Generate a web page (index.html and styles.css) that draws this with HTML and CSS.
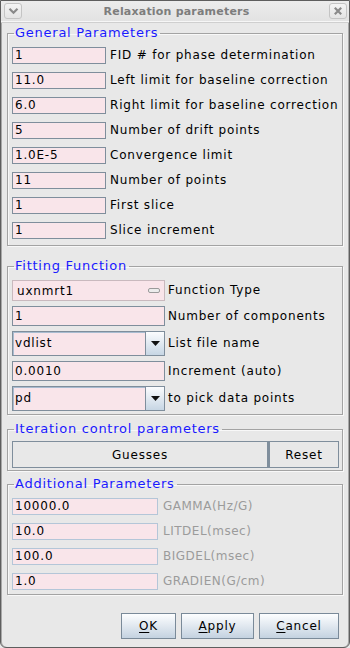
FILE: index.html
```html
<!DOCTYPE html>
<html>
<head>
<meta charset="utf-8">
<title>Relaxation parameters</title>
<link rel="stylesheet" href="styles.css">
</head>
<body>
<div class="window">
  <div class="titlebar">
    <span class="tbtn"><svg width="11" height="8" viewBox="0 0 11 8"><path d="M1.5 1.8 L5.5 5.8 L9.5 1.8" fill="none" stroke="#8a8a8a" stroke-width="2.2"/></svg></span>
    <span class="title">Relaxation parameters</span>
    <span class="tbtn"><svg width="10" height="10" viewBox="0 0 10 10"><path d="M1.8 1.8 L8.2 8.2 M8.2 1.8 L1.8 8.2" fill="none" stroke="#8a8a8a" stroke-width="2.2"/></svg></span>
  </div>
  <div class="content">
    <fieldset class="group g1">
      <legend>General Parameters</legend>
      <div class="grid grid1">
        <span class="field">1</span><span class="label">FID # for phase determination</span>
        <span class="field">11.0</span><span class="label">Left limit for baseline correction</span>
        <span class="field">6.0</span><span class="label">Right limit for baseline correction</span>
        <span class="field">5</span><span class="label">Number of drift points</span>
        <span class="field">1.0E-5</span><span class="label">Convergence limit</span>
        <span class="field">11</span><span class="label">Number of points</span>
        <span class="field">1</span><span class="label">First slice</span>
        <span class="field">1</span><span class="label">Slice increment</span>
      </div>
    </fieldset>

    <fieldset class="group g2">
      <legend>Fitting Function</legend>
      <div class="grid grid2">
        <span class="combo-flat">uxnmrt1<span class="mini"></span></span><span class="label">Function Type</span>
        <span class="field tall20">1</span><span class="label">Number of components</span>
        <span class="combo"><span class="combo-text">vdlist</span><span class="arrow"><svg width="9" height="5" viewBox="0 0 9 5"><path d="M0 0 H9 L4.5 5 Z" fill="#111"/></svg></span></span><span class="label">List file name</span>
        <span class="field tall20">0.0010</span><span class="label">Increment (auto)</span>
        <span class="combo"><span class="combo-text">pd</span><span class="arrow"><svg width="9" height="5" viewBox="0 0 9 5"><path d="M0 0 H9 L4.5 5 Z" fill="#111"/></svg></span></span><span class="label">to pick data points</span>
      </div>
    </fieldset>

    <fieldset class="group g3">
      <legend>Iteration control parameters</legend>
      <div class="btnrow">
        <span class="flatbtn grow">Guesses</span><span class="flatbtn reset">Reset</span>
      </div>
    </fieldset>

    <fieldset class="group g4">
      <legend>Additional Parameters</legend>
      <div class="grid grid4">
        <span class="field dis">10000.0</span><span class="label gray">GAMMA(Hz/G)</span>
        <span class="field dis">10.0</span><span class="label gray">LITDEL(msec)</span>
        <span class="field dis">100.0</span><span class="label gray">BIGDEL(msec)</span>
        <span class="field dis">1.0</span><span class="label gray">GRADIEN(G/cm)</span>
      </div>
    </fieldset>

    <div class="actions">
      <span class="btn ok"><u>O</u>K</span>
      <span class="btn apply"><u>A</u>pply</span>
      <span class="btn cancel"><u>C</u>ancel</span>
    </div>
  </div>
</div>
</body>
</html>
```

FILE: styles.css
```css
* { box-sizing: border-box; }
html, body { margin: 0; padding: 0; }
body {
  width: 350px;
  height: 648px;
  overflow: hidden;
  background: #e8e8e8;
  font-family: "DejaVu Sans", sans-serif;
  font-size: 12px;
  letter-spacing: 0.8px;
  color: #000;
}
.window {
  width: 350px;
  height: 648px;
  border: 1px solid #5e5e5e;
  border-radius: 0 0 6px 6px;
  background: #e8e8e8;
  box-shadow: inset 1px 0 0 #a8a8a8, inset -1px 0 0 #a8a8a8;
  overflow: hidden;
}
.titlebar {
  height: 21px;
  display: flex;
  align-items: center;
  justify-content: space-between;
  padding: 0 2px 0 3px;
  background: linear-gradient(#ececec, #e2e2e2);
  border-bottom: 1px solid #f6f6f6;
  box-shadow: 0 1px 0 #cfcfcf;
}
.title {
  font-family: "DejaVu Sans", sans-serif;
  font-weight: bold;
  font-size: 11px;
  color: #7d7d7d;
  letter-spacing: 0.2px;
  padding-left: 2px;
}
.tbtn {
  width: 18px;
  height: 16px;
  border: 1px solid #c4c4c4;
  border-radius: 3px;
  background: linear-gradient(#f4f4f4, #e4e4e4);
  display: flex;
  align-items: center;
  justify-content: center;
}
.content {
  padding: 4px 6px 0 6px;
}
.group {
  margin: 0;
  border: 1px solid #a3a3a3;
  box-shadow: inset 1px 1px 0 #f8f8f8, 1px 1px 0 #f8f8f8;
  padding: 7px 3px 6px 4px;
  min-width: 0;
}
.group legend {
  color: #1a1aff;
  font-size: 13px;
  line-height: 14px;
  height: 14px;
  padding: 0 2px 0 1px;
  margin-left: 2px;
  letter-spacing: 0.75px;
}
.grid {
  display: grid;
  align-items: center;
}
.grid1 {
  grid-template-columns: 94px auto;
  column-gap: 4px;
  row-gap: 8px;
  grid-auto-rows: 17px;
}
.grid2 {
  grid-template-columns: 153px auto;
  column-gap: 3px;
  row-gap: 5px;
  grid-template-rows: 21px 20px 25px 20px 25px;
}
.grid4 {
  grid-template-columns: 146px auto;
  column-gap: 5px;
  row-gap: 8px;
  grid-auto-rows: 17px;
}
.label {
  white-space: nowrap;
  line-height: 15px;
}
.label.gray { color: #9b9b9b; letter-spacing: 0.5px; }
.field {
  display: block;
  height: 17px;
  background: #f9e5ea;
  border: 1px solid #7f8e9c;
  padding: 0 2px;
  line-height: 15px;
  white-space: nowrap;
  overflow: hidden;
}
.field.tall20 { height: 20px; line-height: 18px; }
.field.dis { border-color: #b4c6d8; }
.combo-flat {
  display: flex;
  align-items: center;
  justify-content: space-between;
  height: 21px;
  background: #f9e5ea;
  border: 1px solid #c9b9be;
  padding: 0 4px 0 4px;
}
.mini {
  width: 12px;
  height: 5px;
  border: 1px solid #9a9a9a;
  border-radius: 2px;
  background: #ececec;
}
.combo {
  display: flex;
  height: 25px;
}
.combo-text {
  flex: 1;
  background: #f9e5ea;
  border: 1px solid #7f8e9c;
  box-shadow: inset 1px 1px 0 #a8bcd0;
  padding: 0 2px;
  line-height: 23px;
}
.arrow {
  width: 19px;
  border: 1px solid #7f8e9c;
  border-left: none;
  background: linear-gradient(#fbfcfe, #c7d6e4);
  display: flex;
  align-items: center;
  justify-content: center;
}
.g2 { margin-top: 13px; padding-bottom: 3px; }
.g3 { margin-top: 7px; padding-top: 5px; padding-bottom: 2px; }
.g4 { margin-top: 6px; padding-bottom: 4px; }
.btnrow {
  display: flex;
  height: 27px;
}
.flatbtn {
  display: flex;
  align-items: center;
  justify-content: center;
  border: 1px solid #7f8e9c;
  background: #e8e8e8;
}
.flatbtn.grow { flex: 1; }
.flatbtn.reset { width: 71px; border-left-width: 2px; }
.actions {
  display: flex;
  justify-content: flex-end;
  gap: 5px;
  margin-top: 18px;
  padding-right: 4px;
}
.btn {
  height: 26px;
  display: flex;
  align-items: center;
  justify-content: center;
  border: 1px solid #7a8a99;
  background: linear-gradient(#fdfeff, #c4d2e0);
}
.btn u { text-decoration: underline; text-underline-offset: 2px; }
.btn.ok { width: 55px; }
.btn.apply { width: 73px; }
.btn.cancel { width: 80px; }
```
